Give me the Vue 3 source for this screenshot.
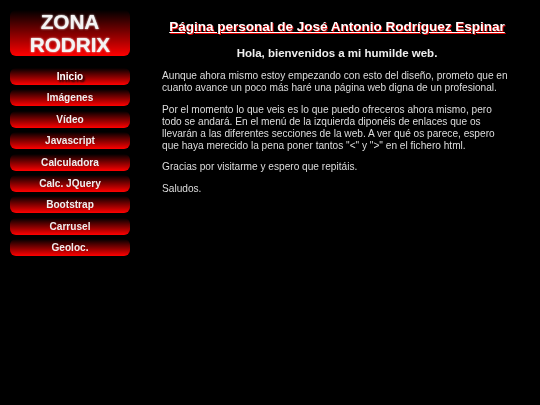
<script setup>
const items = ['Inicio', 'Imágenes', 'Vídeo', 'Javascript', 'Calculadora', 'Calc. JQuery', 'Bootstrap', 'Carrusel', 'Geoloc.']
</script>

<template>
  <div class="page">
    <aside class="side">
      <div class="logo">ZONA<br />RODRIX</div>
      <nav class="nav">
        <a v-for="(it, i) in items" :key="it" class="item" :class="{ active: i === 0 }">{{ it }}</a>
      </nav>
    </aside>
    <main class="main">
      <h1>Página personal de José Antonio Rodríguez Espinar</h1>
      <h2>Hola, bienvenidos a mi humilde web.</h2>
      <p>Aunque ahora mismo estoy empezando con esto del diseño, prometo que en cuanto avance un poco más haré una página web digna de un profesional.</p>
      <p>Por el momento lo que veis es lo que puedo ofreceros ahora mismo, pero todo se andará. En el menú de la izquierda diponéis de enlaces que os llevarán a las diferentes secciones de la web. A ver qué os parece, espero que haya merecido la pena poner tantos "&lt;" y "&gt;" en el fichero html.</p>
      <p>Gracias por visitarme y espero que repitáis.</p>
      <p>Saludos.</p>
    </main>
  </div>
</template>

<style>
html, body { margin: 0; background: #000; }
</style>

<style scoped>
.page {
  display: flex;
  width: 540px;
  height: 405px;
  background: #000;
  color: #fff;
  font-family: "Liberation Sans", Arial, sans-serif;
  overflow: hidden;
  filter: blur(0.4px);
}
.side {
  width: 120px;
  margin-left: 10px;
  padding-top: 10px;
  flex: none;
}
.logo {
  height: 46px;
  background: linear-gradient(#000, #f00);
  border-radius: 6px;
  text-align: center;
  font-size: 20.8px;
  letter-spacing: -0.1px;
  line-height: 23px;
  font-weight: bold;
  text-shadow: 0 0 2px #fff;
  color: #f4f4f4;
  margin-bottom: 12px;
}
.nav {
  display: flex;
  flex-direction: column;
  gap: 4.4px;
}
.item {
  height: 17px;
  background: linear-gradient(#000, #f00);
  border-radius: 6px;
  text-align: center;
  font-size: 10.1px;
  font-weight: bold;
  line-height: 17px;
  color: #eee;
}
.item.active { text-shadow: 2px 2px 2px #000; color: #fff; }
.main {
  margin-left: 32px;
  width: 350px;
  font-size: 10.13px;
  line-height: 11.9px;
  color: #ddd;
}
h1 {
  margin: 19px 0 0;
  font-size: 13.5px;
  line-height: 16px;
  font-weight: bold;
  text-align: center;
  text-decoration: underline;
  color: #fff;
  text-shadow: 1px 1px 0 #d00;
}
h2 {
  margin: 11px 0 0;
  font-size: 11.5px;
  line-height: 14px;
  font-weight: bold;
  text-align: center;
  color: #eee;
}
h2 + p { margin-top: 10px; }
p { margin: 10px 0 0; }
</style>
